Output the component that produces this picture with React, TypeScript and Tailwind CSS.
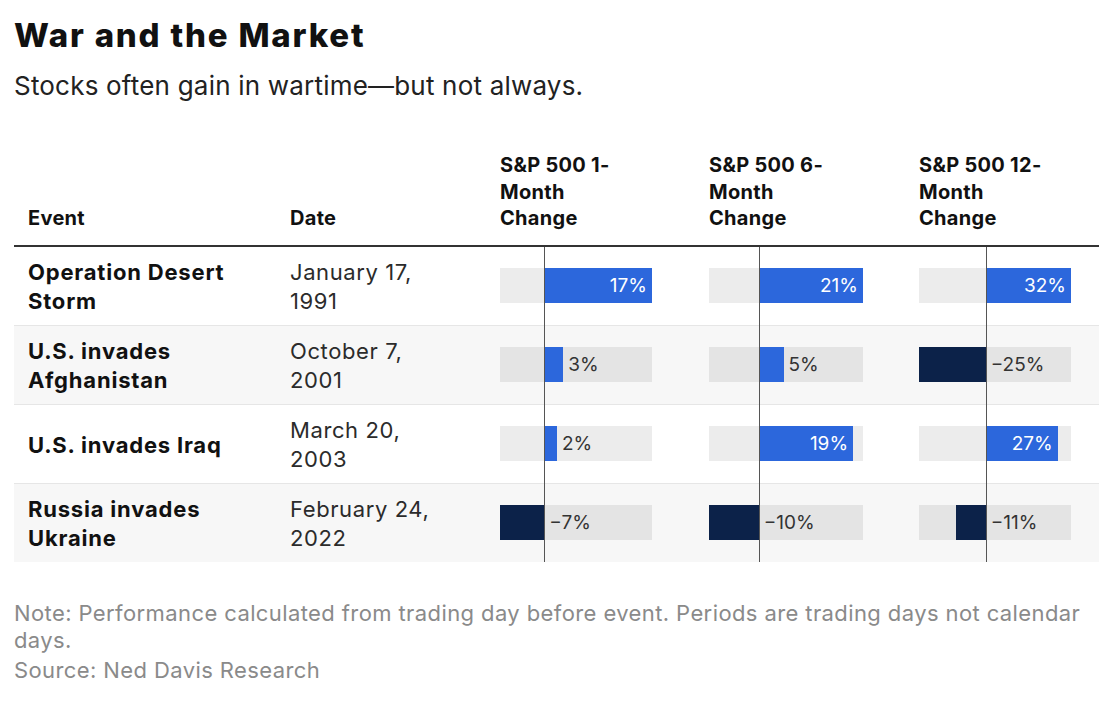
import React from "react";

type Col = { w: number; min: number; max: number };

const cols: Col[] = [
  { w: 152, min: -7, max: 17 },
  { w: 154, min: -10, max: 21 },
  { w: 152, min: -25, max: 32 },
];

const rows = [
  { event: ["Operation Desert", "Storm"], date: ["January 17,", "1991"], vals: [17, 21, 32], bg: false },
  { event: ["U.S. invades", "Afghanistan"], date: ["October 7,", "2001"], vals: [3, 5, -25], bg: true },
  { event: ["U.S. invades Iraq"], date: ["March 20,", "2003"], vals: [2, 19, 27], bg: false },
  { event: ["Russia invades", "Ukraine"], date: ["February 24,", "2022"], vals: [-7, -10, -11], bg: true },
];

function fmt(v: number) {
  return v < 0 ? `\u2212${Math.abs(v)}%` : `${v}%`;
}

function BarCell({ v, col, last }: { v: number; col: Col; last: boolean }) {
  const scale = col.w / (col.max - col.min);
  const zero = -col.min * scale;
  const len = Math.abs(v) * scale;
  const inside = v > 0 && len > 50;
  return (
    <div className="relative flex items-center pl-[14px]">
      <div className="relative h-[35px] bg-black/[0.075]" style={{ width: col.w }}>
        {v >= 0 ? (
          <div
            className="absolute top-0 bottom-0 bg-[#2c67dc] flex items-center justify-end pr-[5px]"
            style={{ left: zero, width: len }}
          >
            {inside && <span className="text-white text-[19px] leading-none">{fmt(v)}</span>}
          </div>
        ) : (
          <div className="absolute top-0 bottom-0 bg-[#0c2249]" style={{ left: zero - len, width: len }} />
        )}
        {!inside && (
          <span
            className="absolute top-0 bottom-0 flex items-center text-[19px] leading-none text-[#333]"
            style={{ left: (v >= 0 ? zero + len : zero) + 5 }}
          >
            {fmt(v)}
          </span>
        )}
      </div>
      <div
        className={`absolute top-0 w-px bg-[#555] z-10 ${last ? "bottom-0" : "bottom-[-1px]"}`}
        style={{ left: 14 + zero }}
      />
    </div>
  );
}

export default function App() {
  return (
    <div className="w-[1118px] h-[706px] bg-white font-['Inter',sans-serif] pl-[14px] pt-[16px] overflow-hidden">
      <h1 className="text-[33px] font-extrabold leading-[38px] text-[#111] tracking-[1.8px] whitespace-nowrap">War and the Market</h1>
      <p className="mt-[16px] text-[26px] leading-[32px] text-[#222] tracking-[0.2px] whitespace-nowrap">Stocks often gain in wartime—but not always.</p>

      <div className="mt-[50px] w-[1085px]">
        <div className="grid grid-cols-[262px_210px_209px_210px_194px] border-b-[2.5px] border-[#333] pb-[13px] items-end text-[20px] leading-[26.5px] font-bold text-[#111] tracking-[0.3px]">
          <div className="pl-[14px]">Event</div>
          <div className="pl-[14px]">Date</div>
          <div className="pl-[14px]">
            <div>S&amp;P 500 1-</div>
            <div>Month</div>
            <div>Change</div>
          </div>
          <div className="pl-[14px]">
            <div>S&amp;P 500 6-</div>
            <div>Month</div>
            <div>Change</div>
          </div>
          <div className="pl-[14px]">
            <div>S&amp;P 500 12-</div>
            <div>Month</div>
            <div>Change</div>
          </div>
        </div>

        {rows.map((r, i) => {
          const last = i === rows.length - 1;
          return (
            <div
              key={i}
              className={`grid grid-cols-[262px_210px_209px_210px_194px] h-[78px] ${r.bg ? "bg-[#f7f7f7]" : "bg-white"} ${last ? "" : "border-b border-[#e6e6e6] box-content"}`}
            >
              <div className="flex flex-col justify-center pl-[14px] pt-[3px] text-[22px] leading-[29px] font-bold text-[#111] tracking-[0.8px] whitespace-nowrap">
                {r.event.map((l, j) => (
                  <div key={j}>{l}</div>
                ))}
              </div>
              <div className="flex flex-col justify-center pl-[14px] pt-[3px] text-[22px] leading-[29px] text-[#2b2b2b] tracking-[0.6px] whitespace-nowrap">
                {r.date.map((l, j) => (
                  <div key={j}>{l}</div>
                ))}
              </div>
              {r.vals.map((v, j) => (
                <BarCell key={j} v={v} col={cols[j]} last={last} />
              ))}
            </div>
          );
        })}
      </div>

      <div className="mt-[38px] text-[22px] leading-[27px] text-[#8a8a8a] tracking-[0.4px]">
        <div className="whitespace-nowrap">
          Note: Performance calculated from trading day before event. Periods are trading days not calendar
        </div>
        <div>days.</div>
        <div className="mt-[3px] whitespace-nowrap">Source: Ned Davis Research</div>
      </div>
    </div>
  );
}
